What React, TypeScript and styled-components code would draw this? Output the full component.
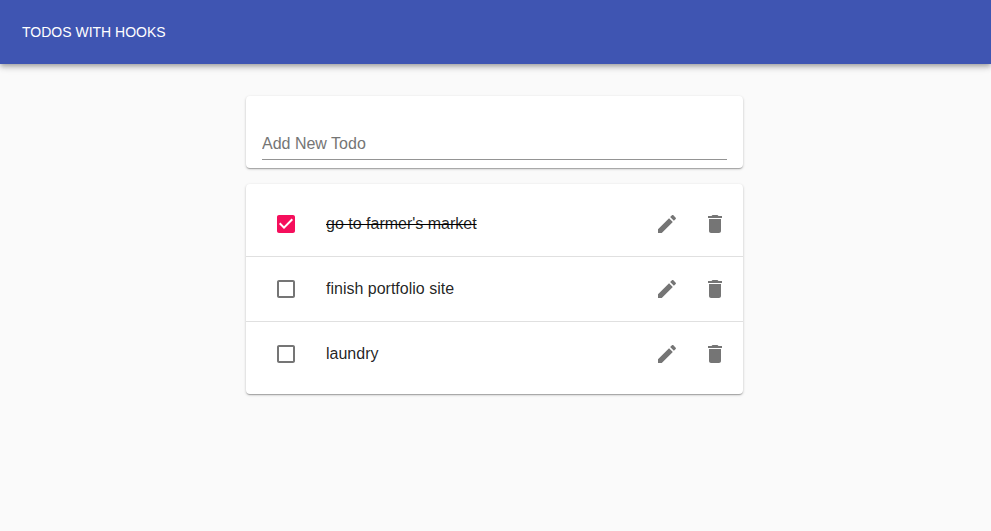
import React, { useState } from "react";
import styled, { createGlobalStyle } from "styled-components";

const GlobalStyle = createGlobalStyle`
  *, *::before, *::after { box-sizing: border-box; }
  body {
    margin: 0;
    background: #fafafa;
    color: rgba(0, 0, 0, 0.87);
    font-family: "Liberation Sans", Helvetica, Arial, sans-serif;
    -webkit-font-smoothing: antialiased;
  }
`;

const Page = styled.div`
  min-height: 100vh;
`;

const AppBar = styled.header`
  position: relative;
  display: flex;
  align-items: center;
  height: 64px;
  padding: 0 22px;
  background: #3f55b2;
  color: #fff;
  box-shadow: 0 2px 4px -1px rgba(0, 0, 0, 0.2), 0 4px 5px 0 rgba(0, 0, 0, 0.14),
    0 1px 10px 0 rgba(0, 0, 0, 0.12);
`;

const Title = styled.h1`
  margin: 0;
  font-size: 14px;
  font-weight: 400;
  line-height: 20px;
`;

const Content = styled.main`
  display: flex;
  flex-direction: column;
  gap: 16px;
  width: 497px;
  margin: 32px 0 0 246px;
`;

const Paper = styled.section`
  background: #fff;
  border-radius: 4px;
  box-shadow: 0 1px 3px 0 rgba(0, 0, 0, 0.2), 0 1px 1px 0 rgba(0, 0, 0, 0.14),
    0 2px 1px -1px rgba(0, 0, 0, 0.12);
`;

const FormPaper = styled(Paper)`
  height: 72px;
  padding: 32px 16px 8px;
`;

const TodoInput = styled.input`
  display: block;
  width: 100%;
  height: 32px;
  padding: 0;
  border: 0;
  border-bottom: 1px solid #949494;
  outline: 0;
  background: none;
  font: 16px "Liberation Sans", Helvetica, Arial, sans-serif;
  &::placeholder { color: #757575; opacity: 1; }
`;

const List = styled.ul`
  margin: 0;
  padding: 8px 0;
  list-style: none;
`;

const Item = styled.li`
  display: flex;
  align-items: center;
  height: 64px;
  padding: 0 4px 0 16px;
  & + & { height: 65px; border-top: 1px solid #e0e0e0; }
`;

const IconButton = styled.button<{ $active?: boolean }>`
  display: flex;
  flex: none;
  padding: 12px;
  border: 0;
  background: none;
  color: ${(p) => (p.$active ? "#f50f5c" : "#757575")};
  cursor: pointer;
`;

const Icon = styled.svg`
  width: 24px;
  height: 24px;
  fill: currentColor;
`;

const Task = styled.span<{ $done: boolean }>`
  flex: 1;
  padding-left: 16px;
  font-size: 16px;
  line-height: 24px;
  text-decoration: ${(p) => (p.$done ? "line-through #000" : "none")};
`;

const paths = {
  checked:
    "M19 3H5c-1.11 0-2 .9-2 2v14c0 1.1.89 2 2 2h14c1.11 0 2-.9 2-2V5c0-1.1-.89-2-2-2zm-9 14l-5-5 1.41-1.41L10 14.17l7.59-7.59L19 8l-9 9z",
  unchecked:
    "M19 5v14H5V5h14m0-2H5c-1.1 0-2 .9-2 2v14c0 1.1.9 2 2 2h14c1.1 0 2-.9 2-2V5c0-1.1-.9-2-2-2z",
  edit: "M3 17.25V21h3.75L17.81 9.94l-3.75-3.75L3 17.25zM20.71 7.04c.39-.39.39-1.02 0-1.41l-2.34-2.34c-.39-.39-1.02-.39-1.41 0l-1.83 1.83 3.75 3.75 1.83-1.83z",
  remove: "M6 19c0 1.1.9 2 2 2h8c1.1 0 2-.9 2-2V7H6v12zM19 4h-3.5l-1-1h-5l-1 1H5v2h14V4z",
};

const Glyph = ({ name }: { name: keyof typeof paths }) => (
  <Icon viewBox="0 0 24 24" aria-hidden="true">
    <path d={paths[name]} />
  </Icon>
);

const initialTodos = [
  { id: 1, task: "go to farmer's market", done: true },
  { id: 2, task: "finish portfolio site", done: false },
  { id: 3, task: "laundry", done: false },
];

export default function App() {
  const [todos, setTodos] = useState(initialTodos);
  const toggle = (id: number) =>
    setTodos(todos.map((t) => (t.id === id ? { ...t, done: !t.done } : t)));
  const remove = (id: number) => setTodos(todos.filter((t) => t.id !== id));

  return (
    <Page>
      <GlobalStyle />
      <AppBar>
        <Title>TODOS WITH HOOKS</Title>
      </AppBar>
      <Content>
        <FormPaper>
          <TodoInput placeholder="Add New Todo" />
        </FormPaper>
        <Paper>
          <List>
            {todos.map(({ id, task, done }) => (
              <Item key={id}>
                <IconButton $active={done} onClick={() => toggle(id)}>
                  <Glyph name={done ? "checked" : "unchecked"} />
                </IconButton>
                <Task $done={done}>{task}</Task>
                <IconButton>
                  <Glyph name="edit" />
                </IconButton>
                <IconButton onClick={() => remove(id)}>
                  <Glyph name="remove" />
                </IconButton>
              </Item>
            ))}
          </List>
        </Paper>
      </Content>
    </Page>
  );
}
